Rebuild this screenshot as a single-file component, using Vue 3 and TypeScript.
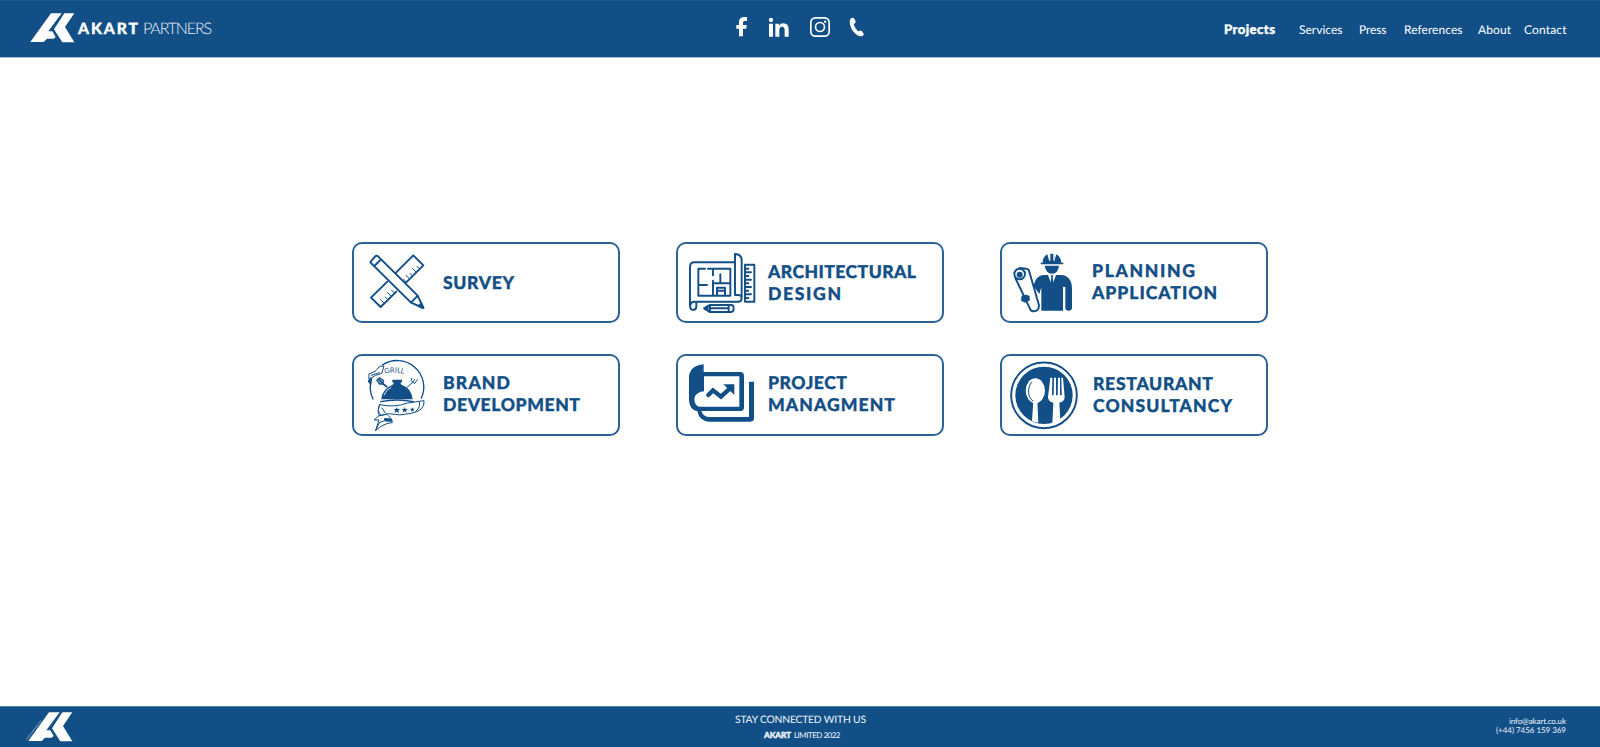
<script setup lang="ts">
import { h } from 'vue'

interface FitProps {
  text: string
  width: number
  size: number
  weight?: number
  height: number
  base: number
}

// A single line of text tracked out to an exact measure.
const Fit = (p: FitProps) =>
  h('svg', { width: p.width, height: p.height, class: 'fit' }, [
    h(
      'text',
      {
        x: 0,
        y: p.base,
        'font-size': p.size,
        'font-weight': p.weight ?? 400,
        textLength: p.width,
        lengthAdjust: 'spacing',
      },
      p.text,
    ),
  ])
Fit.props = ['text', 'width', 'size', 'weight', 'height', 'base']

interface Service {
  key: string
  view: string
  lines: { text: string; width: number }[]
}

const services: Service[] = [
  { key: 'survey', view: '27 27 255 231', lines: [{ text: 'SURVEY', width: 71 }] },
  {
    key: 'architect',
    view: '24 27 255 231',
    lines: [{ text: 'ARCHITECTURAL', width: 148 }, { text: 'DESIGN', width: 73 }],
  },
  {
    key: 'planning',
    view: '27 27 255 231',
    lines: [{ text: 'PLANNING', width: 103 }, { text: 'APPLICATION', width: 125 }],
  },
  {
    key: 'branding',
    view: '27 24 255 234',
    lines: [{ text: 'BRAND', width: 67 }, { text: 'DEVELOPMENT', width: 137 }],
  },
  {
    key: 'project',
    view: '24 24 255 234',
    lines: [{ text: 'PROJECT', width: 79 }, { text: 'MANAGMENT', width: 127 }],
  },
  {
    key: 'restaurant',
    view: '27 24 255 234',
    lines: [{ text: 'RESTAURANT', width: 120 }, { text: 'CONSULTANCY', width: 139 }],
  },
]

const links = [
  { text: 'Projects', width: 51, gap: 24, bold: true },
  { text: 'Services', width: 43.5, gap: 16.5 },
  { text: 'Press', width: 27.5, gap: 17 },
  { text: 'References', width: 58.5, gap: 16 },
  { text: 'About', width: 33, gap: 12.5 },
  { text: 'Contact', width: 42.5, gap: 0 },
]
</script>

<template>
  <div class="page">
    <header class="top">
      <a class="logo">
        <svg class="mark" width="45" height="30" viewBox="92 40 135 90">
          <path d="M93 127 155 41H187L147 95H159L169 112 163 117H143L133 127Z" />
          <path d="M195 41H225L197 82 225 128H189L164 89Z" />
        </svg>
        <Fit class="strong" text="AKART" :width="60" :size="15.7" :weight="900" :height="20" :base="15.5" />
        <Fit class="light" text="PARTNERS" :width="69" :size="16" :weight="300" :height="20" :base="15.5" />
      </a>
      <div class="social">
        <svg width="160" height="57" viewBox="0 0 480 171">
          <path d="M81 51V63H73Q69 63 69 68V75H80L79 86H69V109H57V86H49V75H57V67Q57 52 71 51Z" />
          <circle cx="153" cy="60" r="6.5" />
          <path d="M147 71H159V110H147ZM166 71H177V77Q181 70 190 70Q206 70 206 88V110H194V90Q194 80 186 80Q178 80 178 90V110H166Z" />
          <g class="ring">
            <rect x="272.500" y="53.500" width="55" height="55" rx="14" />
            <circle cx="300" cy="81" r="13.500" />
          </g>
          <circle cx="315.500" cy="65" r="3.500" />
          <path d="M393 55Q399 51 402 55L407 64Q408 68 403 71L401 73Q404 84 414 94L420 92Q423 91 426 94L431 101Q433 105 428 107Q419 112 408 103Q390 87 389 66Q389 59 393 55Z" />
        </svg>
      </div>
      <nav class="menu">
        <a v-for="l in links" :key="l.text" :style="{ marginRight: l.gap + 'px' }">
          <Fit :class="{ strong: l.bold }" :text="l.text" :width="l.width" :size="l.bold ? 13.2 : 12" :weight="l.bold ? 900 : 400" :height="20" :base="14" />
        </a>
      </nav>
    </header>

    <main class="grid">
      <a v-for="s in services" :key="s.key" class="card" :class="s.key">
        <svg class="icon" :viewBox="s.view">
          <g v-if="s.key === 'survey'" class="line">
            <path d="M153 113 205 61 235 91 183 143M127 140 78 188 107 216 154 170" />
            <path class="thin" d="M223 101 216 94M213 111 203 101M202 122 195 115M193 131 183 121M183 140 176 133M147 173 140 166M138 183 128 173M127 193 120 186M117 204 107 194" />
            <path d="M77 80 90 65Q95 60 100 65L218 182 235 219 198 203 79 85Q75 82 77 80ZM88 93 108 73M198 203 218 182" />
            <path class="solid" d="M235 219 221 213 229 205Z" />
          </g>

          <g v-else-if="s.key === 'architect'" class="line">
            <path d="M193 82H73Q60 82 60 96V211Q60 225 70 225 79 225 79 214V200H205Q215 200 215 188V76Q215 58 195 57V180H205Q215 181 215 188M79 201Q61 197 61 213" />
            <path d="M105 101H85V182H181V101H114M129 101V121M85 150H111M129 137V182M129 145H181M151 118V145M141 182V158H165V182M141 167H165" />
            <path d="M225 89H253V200H225ZM225 101H235M225 112H243M225 123H235M225 134H243M225 145H235M225 156H243M225 167H235M225 178H243M225 189H235" />
            <path d="M103 220 119 210H184Q191 210 191 220 191 231 184 231H119ZM120 210V231M125 220H176M176 210V231" />
            <path class="solid" d="M103 220 113 214V226Z" />
          </g>

          <g v-else-if="s.key === 'planning'" class="fill">
            <path d="M143 88V83H149Q149 66 163 58L168 75 169 56H184L185 75 190 58Q204 66 205 83H211V88Z" />
            <path class="gap" d="M170 55V77M183 55V77" />
            <path d="M155 92H198Q195 116 177 116 159 116 155 92Z" />
            <path d="M145 227V157L139 177 121 153Q130 120 151 120H165L177 153 189 120H204Q236 122 237 160V219Q236 227 227 227 218 227 217 219V156H210V227Z" />
            <path d="M173 121H181L179 128 183 149 177 156 171 149 175 128Z" />
            <path class="gap" d="M213 155V228" />
            <g class="line">
              <path class="paper" d="M80 99 99 101Q108 103 109 110L138 211Q138 229 123 229 113 229 111 221L67 129Z" />
              <circle class="paper" cx="80" cy="117" r="16" />
            </g>
            <circle cx="80" cy="119" r="9" />
            <path d="M92 181Q99 177 104 181 112 182 110 190 113 198 104 199 98 206 91 200 82 199 85 191 83 182 92 181Z" />
          </g>

          <g v-else-if="s.key === 'branding'" class="fill">
            <g class="line fine">
              <path d="M84 153A80 80 0 0 1 80 92M112 51A80 80 0 0 1 229 151" />
              <path class="thin" d="M73 77Q93 73 103 55L117 54 110 76Q92 80 73 93ZM79 82 103 74" />
              <path class="paper thin" d="M105 170Q146 180 188 165L237 158Q241 188 198 196 165 205 130 197L104 203Q94 194 105 170Z" />
              <path class="thin" d="M103 171Q95 188 107 200M102 203 126 199Q139 209 139 220 120 213 103 224L92 247Q117 225 142 224L139 213M102 203 87 216 102 216 92 247M223 161Q228 176 213 190M111 180 121 195" />
              <path class="thin" d="M186 118 203 103Q196 99 200 91M203 103 209 106 217 95M203 103 209 94" />
            </g>
            <path d="M68 99 76 88 80 110Q69 105 68 99ZM93 97 104 87 118 97 116 106 128 115 125 119 113 110 103 110Z" />
            <path class="gap thin" d="M99 97 108 106M105 92 114 101" />
            <path d="M109 154Q111 122 143 110L147 104 142 103V95H171V103L166 104 169 110Q200 120 203 154Z" />
            <path class="gap thin" d="M117 142Q123 124 139 118" />
            <path class="line fine" d="M107 161Q156 151 205 161" />
            <path d="M155 177 158 183 165 183 160 188 162 195 155 191 149 195 151 188 146 183 153 183ZM179 177 182 183 188 183 183 188 185 194 179 190 173 194 175 188 170 183 177 183ZM202 178 204 182 209 182 205 186 207 191 202 188 197 191 199 186 195 182 200 182Z" />
            <path d="M116 211Q132 207 144 217 131 223 119 219Z" />
            <path id="badge-arc" class="none" d="M120 78Q147 68 184 80" />
            <text class="badge"><textPath href="#badge-arc" textLength="58">GRILL</textPath></text>
          </g>

          <g v-else-if="s.key === 'project'" class="fill">
            <path d="M101 49V72H211Q222 73 222 83V179Q221 189 211 189H94Q100 207 119 207H237V101H252V211Q252 221 241 221H117Q88 219 82 190 58 185 57 157V85Q61 52 101 49Z" />
            <path class="hole" d="M102 85H208V176H87Q74 173 73 153 75 133 102 130Z" />
            <path class="arrow" d="M115 141 129 127 153 146 180 121" />
            <path d="M160 109H193V141Z" />
          </g>

          <g v-else class="fill">
            <circle class="line" cx="153" cy="142" r="98.500" />
            <circle cx="153" cy="142" r="86" />
            <g class="hole">
              <ellipse cx="127" cy="128" rx="29" ry="37" />
              <path d="M121 158H133L136 224 117 220Z" />
              <path d="M172 89H178L177 142H182L183 89H189V142H194L195 89H201V142H206L205 89H210L215 147Q215 161 199 164L202 216Q190 224 178 226L181 164Q165 161 165 147Z" />
            </g>
            <path class="thin line" d="M115 103Q102 122 109 145 113 155 120 159" />
          </g>
        </svg>
        <span class="label">
          <Fit v-for="l in s.lines" :key="l.text" class="strong" :text="l.text" :width="l.width" :size="17.6" :weight="900" :height="21.7" :base="17" />
        </span>
      </a>
    </main>

    <footer class="bottom">
      <svg class="mark" width="49" height="30" viewBox="80 40 147 90">
        <path d="M93 127 155 41H187L147 95H159L169 112 163 117H143L133 127Z" />
        <path d="M195 41H225L197 82 225 128H189L164 89Z" />
        <path class="hatch" d="M88 122 131 66" />
      </svg>
      <div class="center">
        <Fit text="STAY CONNECTED WITH US" :width="131" :size="10.3" :height="14" :base="10.2" />
        <div class="company">
          <Fit class="strong" text="AKART" :width="27" :size="8.3" :weight="900" :height="12" :base="11" />
          <Fit text="LIMITED 2022" :width="46.5" :size="8" :height="12" :base="11" />
        </div>
      </div>
      <address class="contact">
        <Fit text="info@akart.co.uk" :width="57" :size="8" :height="9" :base="7" />
        <Fit text="(+44) 7456 159 369" :width="70" :size="8" :height="10" :base="7.3" />
      </address>
    </footer>
  </div>
</template>

<style>
body {
  background: #fff;
}
</style>

<style scoped>
.page {
  box-sizing: border-box;
  height: 747px;
  display: flex;
  flex-direction: column;
  overflow: hidden;
  color: #124f87;
  font-family: Lato, "Open Sans", sans-serif;
  text-rendering: geometricPrecision;
}
.fit {
  display: block;
  overflow: visible;
  fill: currentColor;
}
.fit.strong {
  stroke: currentColor;
  stroke-width: 0.35px;
}
.top {
  display: grid;
  grid-template-columns: 720px 504px 1fr;
  height: 56px;
  border-top: 1px solid #1d5990;
  border-bottom: 1px solid #a4b9d6;
  background: #124f87;
  color: #fff;
  flex: none;
}
.logo {
  display: flex;
  align-items: flex-start;
  padding: 12px 0 0 30px;
}
.logo .fit {
  margin: 5px 0 0 3px;
}
.logo .light {
  margin-left: 5px;
  opacity: 0.92;
}
.mark {
  display: block;
  fill: #fff;
}
.social svg {
  display: block;
  margin-top: -1px;
  fill: #fff;
}
.social .ring {
  fill: none;
  stroke: #fff;
  stroke-width: 5;
}
.menu {
  display: flex;
  padding-top: 18.500px;
}
.grid {
  flex: 1;
  display: grid;
  grid-template: 81px 82px / repeat(3, 268px);
  gap: 31px 56px;
  align-content: start;
  padding: 184px 0 0 352px;
}
.card {
  box-sizing: border-box;
  display: flex;
  align-items: flex-start;
  border: 2px solid #2b6296;
  border-radius: 10px;
}
.icon {
  display: block;
  flex: none;
  width: 85px;
  height: 100%;
}
.label {
  padding: 17px 0 0 5px;
}
.survey .label {
  padding: 28px 0 0 3.500px;
}
.planning .label {
  padding-top: 16px;
}
.branding .label {
  padding: 16px 0 0 3.500px;
}
.project .label {
  padding-top: 16px;
}
.restaurant .label {
  padding: 17px 0 0 6px;
}
.fill {
  fill: #124f87;
}
.line {
  fill: none;
  stroke: #124f87;
  stroke-width: 5.800;
  stroke-linejoin: round;
  stroke-linecap: round;
}
.fine {
  stroke-width: 4;
}
.thin {
  stroke-width: 3;
}
.solid {
  fill: #124f87;
}
.paper,
.hole {
  fill: #fff;
}
.gap {
  fill: none;
  stroke: #fff;
  stroke-width: 4;
}
.gap.thin {
  stroke-width: 2.500;
}
.none {
  fill: none;
}
.arrow {
  fill: none;
  stroke: #124f87;
  stroke-width: 13;
  stroke-linecap: round;
}
.badge {
  font-size: 22px;
}
.bottom {
  box-sizing: border-box;
  flex: none;
  height: 41px;
  display: grid;
  grid-template-columns: 24px 49px 1fr 73px;
  border-top: 1px solid #5e84a9;
  background: #124f87;
  color: #eef4fb;
}
.bottom .mark {
  grid-column: 2;
  margin-top: 5px;
}
.hatch {
  stroke: #d4e1ee;
  stroke-width: 5;
  stroke-dasharray: 2 2;
  opacity: 0.6;
}
.center {
  grid-column: 3;
  display: flex;
  flex-direction: column;
  align-items: center;
  padding-top: 6px;
}
.company {
  display: flex;
  gap: 2.500px;
  margin-left: 4px;
}
.contact {
  grid-column: 4;
  display: flex;
  flex-direction: column;
  align-items: flex-end;
  padding: 10px 34px 0 0;
  font-style: normal;
}
</style>
